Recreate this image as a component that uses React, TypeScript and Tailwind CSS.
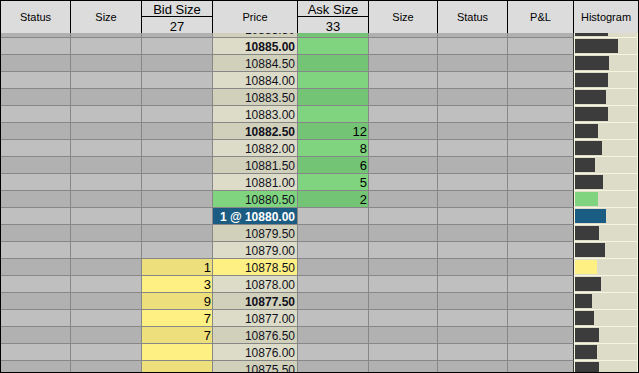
import clsx from "clsx";

// one ladder row per price step, top row sits half under the header
const rows = [
  { price: "10885.50", ask: "", bid: "", hist: 33 },
  { price: "10885.00", ask: "", bid: "", hist: 43 },
  { price: "10884.50", ask: "", bid: "", hist: 34 },
  { price: "10884.00", ask: "", bid: "", hist: 33 },
  { price: "10883.50", ask: "", bid: "", hist: 31 },
  { price: "10883.00", ask: "", bid: "", hist: 33 },
  { price: "10882.50", ask: "12", bid: "", hist: 23 },
  { price: "10882.00", ask: "8", bid: "", hist: 27 },
  { price: "10881.50", ask: "6", bid: "", hist: 20 },
  { price: "10881.00", ask: "5", bid: "", hist: 28 },
  { price: "10880.50", ask: "2", bid: "", hist: 23 },
  { price: "1 @ 10880.00", ask: "", bid: "", hist: 31 },
  { price: "10879.50", ask: "", bid: "", hist: 24 },
  { price: "10879.00", ask: "", bid: "", hist: 30 },
  { price: "10878.50", ask: "", bid: "1", hist: 22 },
  { price: "10878.00", ask: "", bid: "3", hist: 26 },
  { price: "10877.50", ask: "", bid: "9", hist: 17 },
  { price: "10877.00", ask: "", bid: "7", hist: 19 },
  { price: "10876.50", ask: "", bid: "7", hist: 24 },
  { price: "10876.00", ask: "", bid: "", hist: 22 },
  { price: "10875.50", ask: "", bid: "", hist: 24 },
];

const BEST_ASK = 10;
const LAST = 11;
const BEST_BID = 14;

const cols = "grid grid-cols-[70px_71px_71px_85px_71px_69px_70px_66px_64px]";

function HeaderCell({ label }: { label: string }) {
  return (
    <div className="flex items-center justify-center border-r border-black text-[11px] pt-px">
      {label}
    </div>
  );
}

function SizeHeader({ label, total }: { label: string; total: string }) {
  return (
    <div className="flex flex-col border-r border-black text-[13px]">
      <div className="h-[15px] flex items-center justify-center leading-none pt-px">{label}</div>
      <div className="h-px bg-black" />
      <div className="flex-1 flex items-center justify-center leading-none pt-[2px]">{total}</div>
    </div>
  );
}

export default function App() {
  return (
    <div
      className="w-[639px] h-[373px] border border-black overflow-hidden bg-[#b1b1b1] text-black"
      style={{ fontFamily: '"Liberation Sans", Arial, sans-serif' }}
    >
      {/* Header */}
      <div className={clsx(cols, "h-[32px] bg-[#dcdcdc]")}>
        <HeaderCell label="Status" />
        <HeaderCell label="Size" />
        <SizeHeader label="Bid Size" total="27" />
        <HeaderCell label="Price" />
        <SizeHeader label="Ask Size" total="33" />
        <HeaderCell label="Size" />
        <HeaderCell label="Status" />
        <HeaderCell label="P&L" />
        <div className="flex items-center justify-center text-[11px] pt-px">Histogram</div>
      </div>

      {/* Ladder */}
      <div className="h-[339px] overflow-hidden">
        <div className="-mt-[12px]">
          {rows.map((r, i) => {
            const light = i % 2 === 1;
            const gray = light ? "bg-[#bfbfbf]" : "bg-[#b1b1b1]";
            const cell = "h-[17px] border-r border-b border-[#878787]";
            const isAsk = i <= BEST_ASK;
            const isBid = i >= BEST_BID;
            const bold = i % 5 === 1;

            let priceBg = light ? "bg-[#dcdcc8]" : "bg-[#d0d0bb]";
            if (i === BEST_ASK) priceBg = "bg-[#80d480]";
            if (i === LAST) priceBg = "bg-[#1b5d82]";
            if (i === BEST_BID) priceBg = "bg-[#fff084]";

            let bar = "bg-[#3c3c3c]";
            if (i === BEST_ASK) bar = "bg-[#80d480]";
            if (i === LAST) bar = "bg-[#1b5d82]";
            if (i === BEST_BID) bar = "bg-[#fff084]";

            return (
              <div key={r.price} className={cols}>
                <div className={clsx(cell, gray)} />
                <div className={clsx(cell, gray)} />
                <div
                  className={clsx(
                    cell,
                    "text-[13px] leading-[18px] text-right pr-px",
                    isBid ? (light ? "bg-[#fff084]" : "bg-[#ede07c]") : gray
                  )}
                >
                  {r.bid}
                </div>
                <div
                  className={clsx(
                    cell,
                    priceBg,
                    "text-[12px] leading-[18px] text-right pr-[2px]",
                    bold && "font-bold",
                    i === LAST ? "text-white font-bold" : "text-[#10101c]"
                  )}
                >
                  {r.price}
                </div>
                <div
                  className={clsx(
                    cell,
                    "text-[13px] leading-[18px] text-right pr-px",
                    isAsk ? (light ? "bg-[#80d480]" : "bg-[#74c476]") : gray
                  )}
                >
                  {r.ask}
                </div>
                <div className={clsx(cell, gray)} />
                <div className={clsx(cell, gray)} />
                <div className={clsx(cell, gray, "border-r-[#3a3a3a]")} />
                <div className="h-[17px] border-x border-b border-[#f6f6de] bg-[#dcdcc8] py-px">
                  <div className={clsx("h-[14px]", bar)} style={{ width: r.hist }} />
                </div>
              </div>
            );
          })}
        </div>
      </div>
    </div>
  );
}
